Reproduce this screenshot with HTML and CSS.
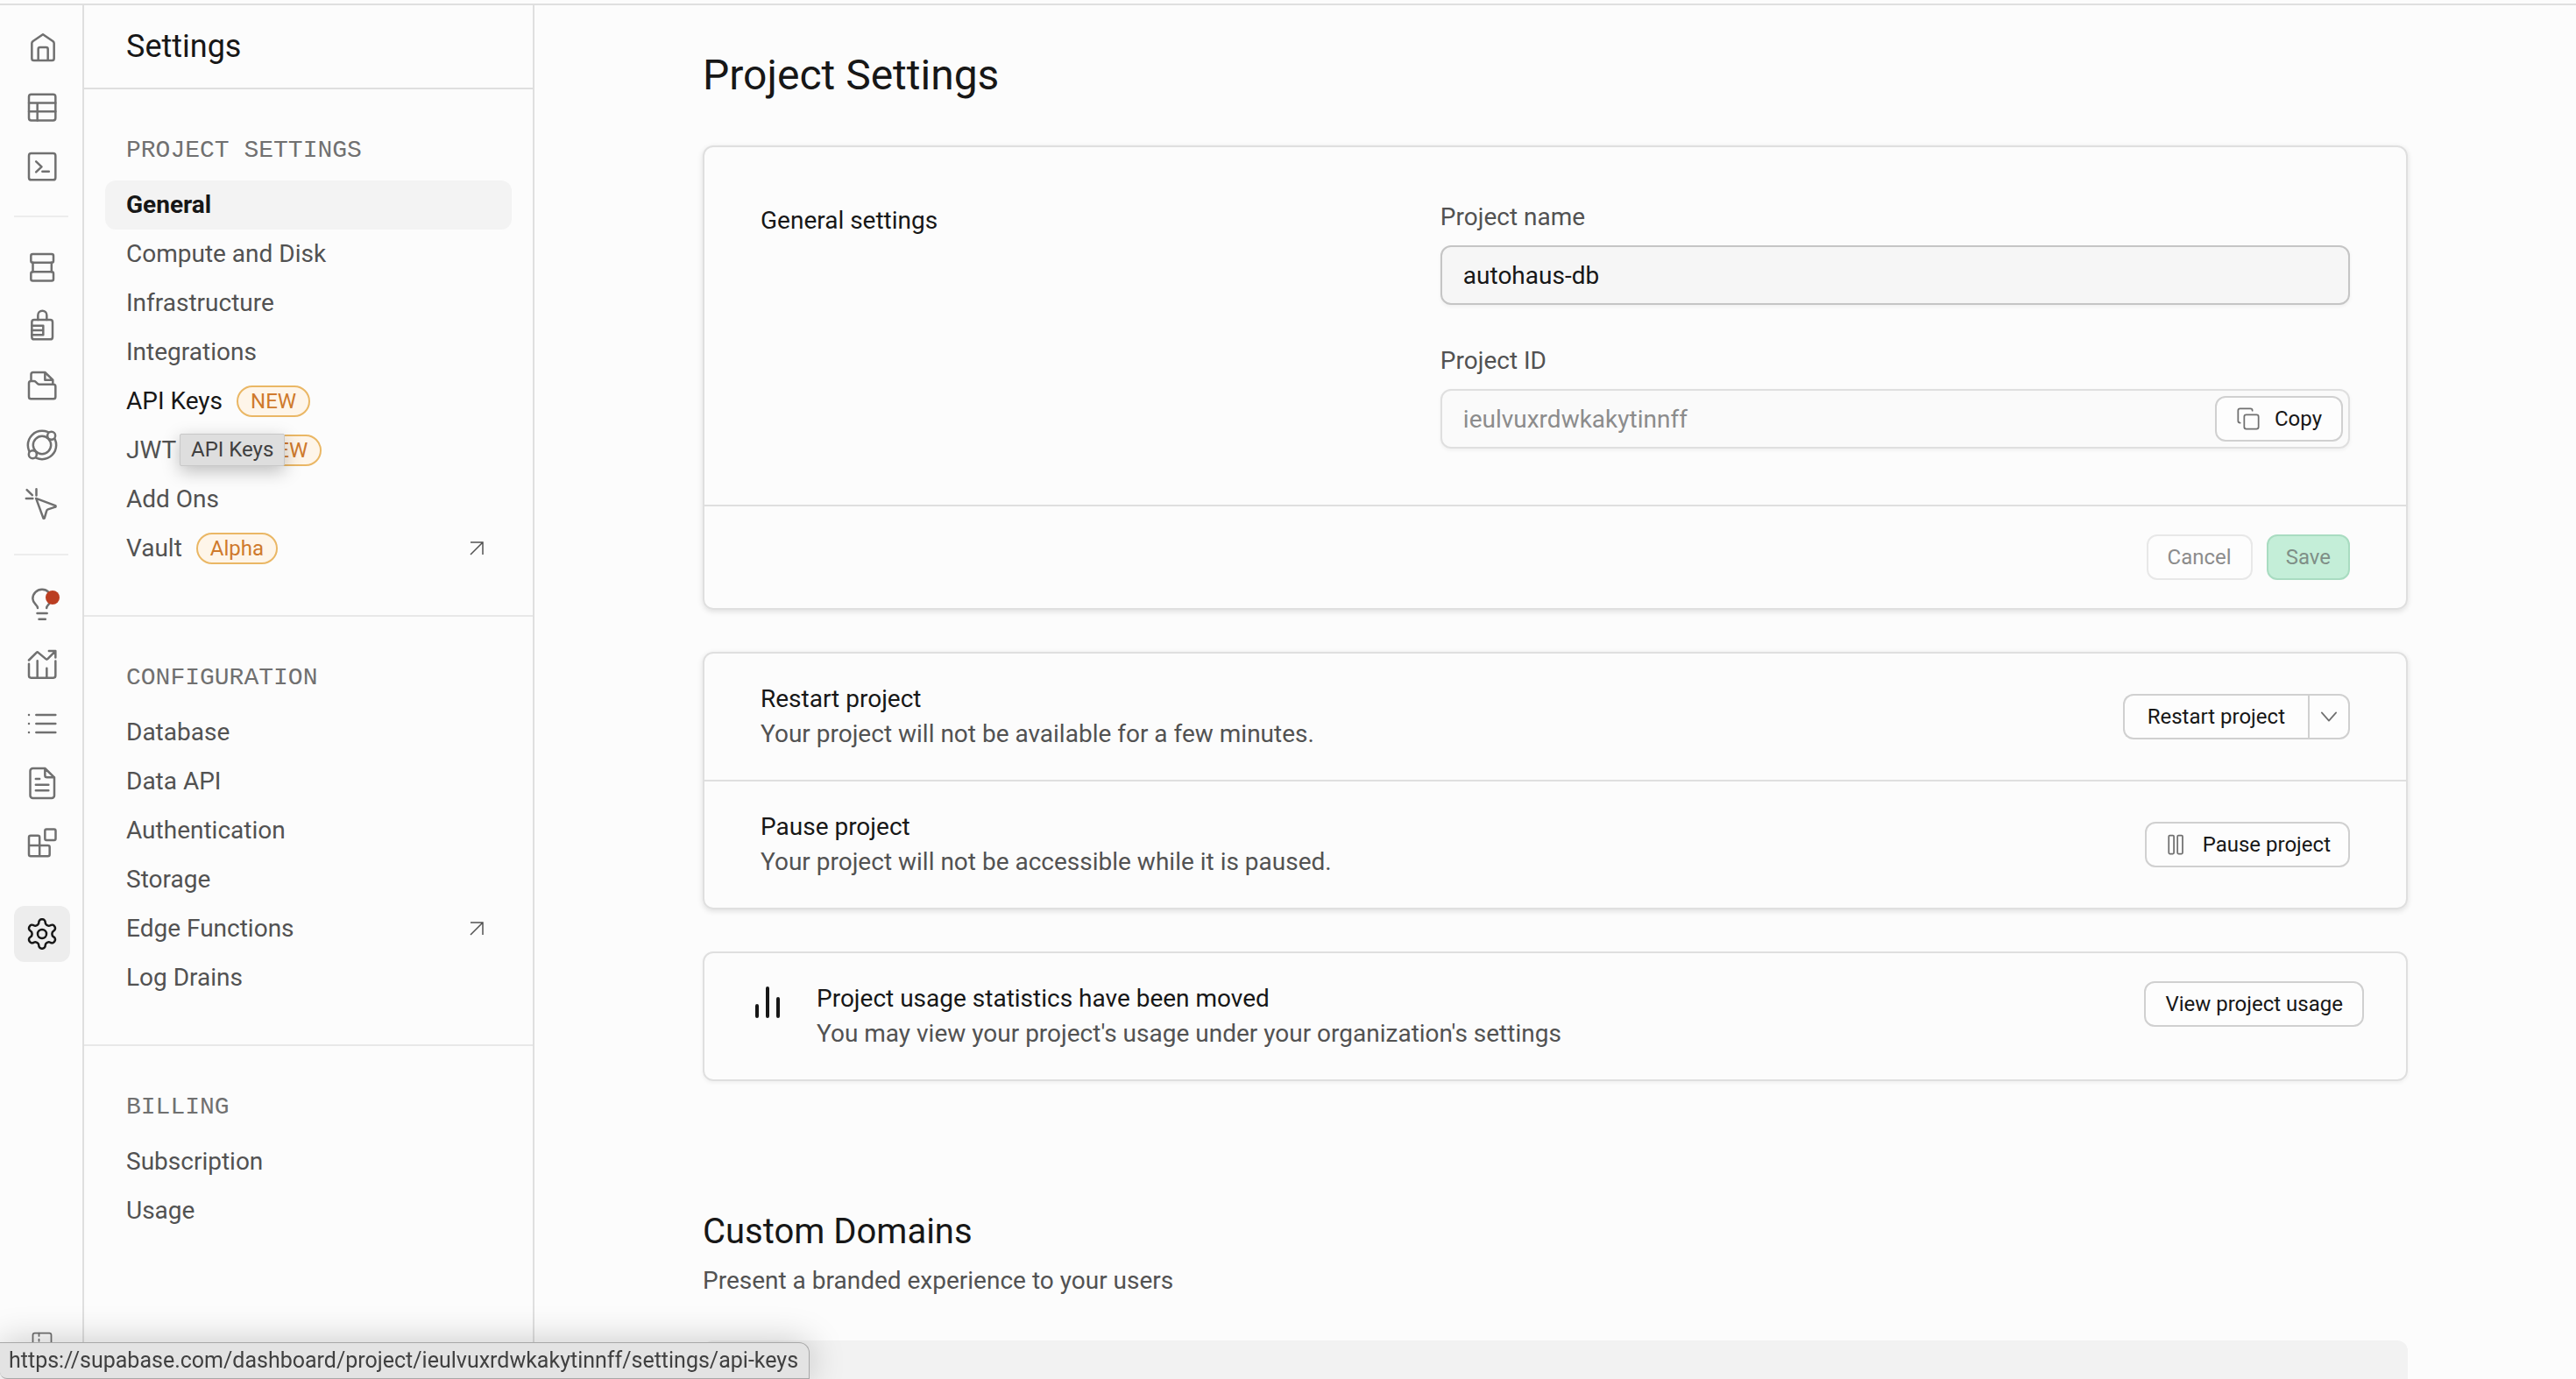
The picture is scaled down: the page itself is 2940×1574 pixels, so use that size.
FILE: index.html
```
<!DOCTYPE html>
<html lang="en">
<head>
  <meta charset="utf-8">
  <meta name="viewport" content="width=device-width, initial-scale=1">
  <title>Project Settings | Supabase</title>
  <link rel="stylesheet" href="styles.css">
</head>
<body>
  <div class="app">
    <nav class="rail" aria-label="Project">
      <a class="rail-link" href="#home" aria-label="Home"><svg class="icon" viewBox="0 0 24 24"><path d="M5 9.200c0-.6.300-1 .8-1.400L12.600 3.200l6.800 4.600c.5.400.8.800.8 1.400V19.600c0 .8-.6 1.400-1.400 1.400H6.400C5.600 21 5 20.400 5 19.600zM9.400 21v-7.800c0-.7.500-1.200 1.200-1.200h4.200c.7 0 1.200.5 1.200 1.200V21"/></svg></a>
      <a class="rail-link" href="#tables" aria-label="Table Editor"><svg class="icon" viewBox="0 0 24 24"><rect x="3" y="3.500" width="18.200" height="17.800" rx="1.600"/><path d="M3 9.300h18.200M3 15.100h18.200M8.800 9.300v12"/></svg></a>
      <a class="rail-link" href="#sql" aria-label="SQL Editor"><svg class="icon" viewBox="0 0 24 24"><rect x="3" y="3" width="18.200" height="18.200" rx="1.600"/><path d="m7.900 8.600 3.800 3.600-3.800 3.600M12.200 15.500h4.500"/></svg></a>
      <hr class="rail-rule">
      <a class="rail-link" href="#database" aria-label="Database"><svg class="icon" viewBox="0 0 24 24"><rect x="4.400" y="3.600" width="15.400" height="5.900" rx="1.200"/><rect x="4.400" y="15.700" width="15.400" height="6.200" rx="1.200"/><path d="M5.700 9.500v6.200M18.500 9.500v6.200"/></svg></a>
      <a class="rail-link" href="#auth" aria-label="Authentication"><svg class="icon" viewBox="0 0 24 24"><rect x="5" y="7.800" width="14.200" height="13.400" rx="1.600"/><path d="M9.200 7.800V4.600a3 3 0 0 1 6 0v3.200M5 11.900h7.800v6.200H5M5 15h7.800"/></svg></a>
      <a class="rail-link" href="#storage" aria-label="Storage"><svg class="icon" viewBox="0 0 24 24"><path d="M4.500 9V4.400C4.500 3.600 5.100 3 5.900 3H14l5.400 5.200v3M14 3v5.200h5.400M3 10.400C3 9.600 3.600 9 4.400 9h2c.5 0 .8.100 1.100.4l1.400 1.300c.3.300.7.500 1.200.5h9.700c.8 0 1.400.6 1.400 1.400v7.200c0 .8-.6 1.400-1.400 1.400H4.400c-.8 0-1.400-.6-1.400-1.400z"/></svg></a>
      <a class="rail-link" href="#edge" aria-label="Edge Functions"><svg class="icon" viewBox="0 0 24 24"><circle cx="12" cy="12" r="9.700"/><circle cx="12" cy="12" r="6.100"/><circle class="icon-knob" cx="18.400" cy="5.600" r="2.700"/><circle class="icon-knob" cx="5.600" cy="18.400" r="2.700"/></svg></a>
      <a class="rail-link" href="#realtime" aria-label="Realtime"><svg class="icon" viewBox="0 0 24 24"><path d="m1.600 1.900 3.700 3.600M8.100 1.400v4.300M1.100 7.800h4.500M7.900 7.700l13.200 5c.4.200.4.800 0 .9l-5 1.600a1.600 1.600 0 0 0-1 1.100l-1.400 4.800c-.2.500-.8.500-.9 0z"/></svg></a>
      <hr class="rail-rule">
      <a class="rail-link" href="#advisors" aria-label="Advisors"><svg class="icon" viewBox="0 0 24 24"><path d="M9 14.400C9 12.200 5.600 11.400 5.600 8a6.400 6.400 0 0 1 12.800 0c0 3.400-3.300 4.200-3.300 6.400M8.700 18h6.700M9.900 22h4.400"/></svg><span class="rail-dot"></span></a>
      <a class="rail-link" href="#reports" aria-label="Reports"><svg class="icon" viewBox="0 0 24 24"><path d="M3 11.800v8.200c0 .8.600 1.400 1.400 1.400h15.400c.8 0 1.400-.6 1.400-1.400V9.900M8.800 9.700v11.700M15.200 14.800v6.600M3 9.300l5.200-5.200a.9.900 0 0 1 1.200 0l5.200 4.400a.9.900 0 0 0 1.200 0l5.200-5.300M16.700 3h4.500v4.500"/></svg></a>
      <a class="rail-link" href="#logs" aria-label="Logs"><svg class="icon" viewBox="0 0 24 24"><path d="M8 6h13.200M8 12h13.200M8 18h13.200M3 6h.01M3 12h.01M3 18h.01"/></svg></a>
      <a class="rail-link" href="#docs" aria-label="API Docs"><svg class="icon" viewBox="0 0 24 24"><path d="M14 1.800H5.700c-1 0-1.800.8-1.800 1.800v16.800c0 1 .8 1.800 1.800 1.800h12.900c1 0 1.800-.8 1.800-1.800V8zM14 1.800v4.800c0 .8.600 1.400 1.400 1.400h5M7.700 9h2.600M7.700 13h8.700M7.700 17h8.700"/></svg></a>
      <a class="rail-link" href="#integrations" aria-label="Integrations"><svg class="icon" viewBox="0 0 24 24"><rect x="14" y="2.700" width="7.300" height="7.500" rx="1"/><path d="M10.300 21.200V8.200c0-.7-.5-1.200-1.200-1.200H4.200C3.500 7 3 7.500 3 8.200V20c0 .7.500 1.200 1.200 1.200H16c.7 0 1.200-.5 1.200-1.200v-5c0-.7-.5-1.200-1.200-1.200H3"/></svg></a>
      <a class="rail-link rail-link-active" href="#settings" aria-label="Project Settings"><svg class="icon" viewBox="0 0 24 24"><path d="M12.220 2h-.44a2 2 0 0 0-2 2v.18a2 2 0 0 1-1 1.730l-.43.250a2 2 0 0 1-2 0l-.15-.08a2 2 0 0 0-2.730.730l-.22.380a2 2 0 0 0 .730 2.730l.15.100a2 2 0 0 1 1 1.720v.510a2 2 0 0 1-1 1.740l-.15.090a2 2 0 0 0-.730 2.730l.22.380a2 2 0 0 0 2.730.730l.15-.08a2 2 0 0 1 2 0l.43.250a2 2 0 0 1 1 1.730V20a2 2 0 0 0 2 2h.44a2 2 0 0 0 2-2v-.18a2 2 0 0 1 1-1.730l.43-.25a2 2 0 0 1 2 0l.15.080a2 2 0 0 0 2.730-.73l.22-.39a2 2 0 0 0-.73-2.730l-.15-.08a2 2 0 0 1-1-1.740v-.5a2 2 0 0 1 1-1.740l.15-.09a2 2 0 0 0 .730-2.730l-.22-.38a2 2 0 0 0-2.730-.73l-.15.080a2 2 0 0 1-2 0l-.43-.25a2 2 0 0 1-1-1.730V4a2 2 0 0 0-2-2z"/><circle cx="12" cy="12" r="3"/></svg></a>
      <button class="rail-toggle" type="button" aria-label="Sidebar control"><svg class="icon icon-small" viewBox="0 0 24 24"><rect x="3" y="3" width="18" height="18" rx="2"/><path d="M9 3v3M9 9v2M9 14v1M9 19v2"/></svg></button>
    </nav>

    <aside class="sidebar">
      <h2 class="sidebar-title">Settings</h2>
      <section class="menu">
        <h3 class="menu-heading">PROJECT SETTINGS</h3>
        <a class="menu-link menu-link-active" href="#general">General</a>
        <a class="menu-link" href="#compute">Compute and Disk</a>
        <a class="menu-link" href="#infrastructure">Infrastructure</a>
        <a class="menu-link" href="#integrations">Integrations</a>
        <a class="menu-link menu-link-hover" href="#api-keys">API Keys <span class="badge">NEW</span><span class="tooltip" role="tooltip">API Keys</span></a>
        <a class="menu-link" href="#jwt">JWT Keys <span class="badge">NEW</span></a>
        <a class="menu-link" href="#addons">Add Ons</a>
        <a class="menu-link" href="#vault">Vault <span class="badge">Alpha</span><svg class="menu-arrow" viewBox="0 0 16 16"><path d="M1 1h14v14M15 1 1 15"/></svg></a>
      </section>
      <section class="menu">
        <h3 class="menu-heading">CONFIGURATION</h3>
        <a class="menu-link" href="#config-database">Database</a>
        <a class="menu-link" href="#data-api">Data API</a>
        <a class="menu-link" href="#authentication">Authentication</a>
        <a class="menu-link" href="#config-storage">Storage</a>
        <a class="menu-link" href="#functions">Edge Functions<svg class="menu-arrow" viewBox="0 0 16 16"><path d="M1 1h14v14M15 1 1 15"/></svg></a>
        <a class="menu-link" href="#log-drains">Log Drains</a>
      </section>
      <section class="menu">
        <h3 class="menu-heading">BILLING</h3>
        <a class="menu-link" href="#subscription">Subscription</a>
        <a class="menu-link" href="#usage">Usage</a>
      </section>
    </aside>

    <main class="main">
      <h1 class="page-title">Project Settings</h1>
      <div class="cards">
        <form class="card">
          <div class="form-grid">
            <h2 class="form-title">General settings</h2>
            <div class="fields">
              <div class="field">
                <label class="label" for="name">Project name</label>
                <input class="input" id="name" type="text" value="autohaus-db">
              </div>
              <div class="field">
                <label class="label" for="project-id">Project ID</label>
                <div class="input-wrap">
                  <input class="input input-muted" id="project-id" type="text" value="ieulvuxrdwkakytinnff" readonly>
                  <button class="button copy" type="button"><svg class="icon icon-small" viewBox="0 0 24 24"><rect x="8" y="8" width="14" height="14" rx="2"/><path d="M4 16c-1.100 0-2-.9-2-2V4c0-1.100.9-2 2-2h10c1.100 0 2 .9 2 2"/></svg>Copy</button>
                </div>
              </div>
            </div>
          </div>
          <div class="card-footer">
            <button class="button button-muted" type="button">Cancel</button>
            <button class="button button-save" type="submit">Save</button>
          </div>
        </form>

        <div class="card">
          <div class="row">
            <div class="row-text">
              <p class="row-title">Restart project</p>
              <p class="row-note">Your project will not be available for a few minutes.</p>
            </div>
            <div class="split">
              <button class="button split-main" type="button">Restart project</button>
              <button class="button split-more" type="button" aria-label="More restart options"><svg class="icon icon-small" viewBox="0 0 24 24"><path d="m5 8 7 8 7-8"/></svg></button>
            </div>
          </div>
          <div class="row">
            <div class="row-text">
              <p class="row-title">Pause project</p>
              <p class="row-note">Your project will not be accessible while it is paused.</p>
            </div>
            <button class="button button-icon" type="button"><svg class="icon icon-small" viewBox="0 0 24 24"><rect x="4.500" y="3" width="5" height="18" rx="1"/><rect x="13" y="3" width="5" height="18" rx="1"/></svg>Pause project</button>
          </div>
        </div>

        <div class="card card-flat notice">
          <svg class="icon icon-bars" viewBox="0 0 24 24"><path d="M18 20V10M12 20V4M6 20v-6"/></svg>
          <div class="row-text">
            <p class="row-title">Project usage statistics have been moved</p>
            <p class="row-note">You may view your project's usage under your organization's settings</p>
          </div>
          <button class="button" type="button">View project usage</button>
        </div>
      </div>

      <section class="domains">
        <h2 class="section-title">Custom Domains</h2>
        <p class="row-note">Present a branded experience to your users</p>
        <div class="banner">
          <svg class="icon icon-bars" viewBox="0 0 24 24"><circle cx="12" cy="12" r="9"/><path d="M12 8v5M12 16h.01"/></svg>
          <p class="row-title">Custom domains are a Pro Plan add-on</p>
        </div>
      </section>
    </main>
  </div>
  <div class="status">https://supabase.com/dashboard/project/ieulvuxrdwkakytinnff/settings/api-keys</div>
</body>
</html>
```
FILE: styles.css
```
:root {
  --bg: #fcfcfc;
  --line: #dfdfdf;
  --line-soft: #e8e8e8;
  --line-strong: #d0d0d0;
  --text: #171717;
  --text-light: #525252;
  --text-lighter: #707070;
}

* {
  box-sizing: border-box;
}

body {
  margin: 0;
  background: var(--bg);
  color: var(--text);
  font-family: Roboto, "Liberation Sans", sans-serif;
  font-size: 28px;
  line-height: 40px;
}

h1, h2, h3, p {
  margin: 0;
  font-weight: 400;
}

a {
  color: inherit;
  text-decoration: none;
}

button, input {
  font: inherit;
  color: inherit;
}

.app {
  display: flex;
  height: 100vh;
  padding-top: 4px;
  overflow: hidden;
}

.icon {
  display: block;
  flex: none;
  width: 40px;
  height: 40px;
  fill: none;
  stroke: currentColor;
  stroke-width: 1.5;
  stroke-linecap: round;
  stroke-linejoin: round;
}

.icon-small {
  width: 28px;
  height: 28px;
  color: var(--text-lighter);
}

.icon-bars {
  width: 48px;
  height: 48px;
  stroke-width: 2;
}

.icon-knob {
  fill: var(--bg);
}

/* Icon rail */

.rail {
  display: flex;
  flex: none;
  flex-direction: column;
  gap: 4px;
  width: 96px;
  padding: 16px 14px 10px 16px;
  border-top: 2px solid var(--line);
  border-right: 2px solid var(--line);
  color: var(--text-lighter);
}

.rail-link, .rail-toggle {
  position: relative;
  display: flex;
  flex: none;
  align-items: center;
  justify-content: center;
  width: 64px;
  height: 64px;
  padding: 0;
  border: 0;
  border-radius: 12px;
  background: none;
}

.rail-toggle {
  margin-top: auto;
}

.rail-link-active {
  margin-top: 36px;
  background: #ededed;
  color: var(--text);
}

.rail-rule {
  flex: none;
  width: 62px;
  height: 2px;
  margin: 20px 0;
  border: 0;
  background: #ededed;
}

.rail-dot {
  position: absolute;
  top: 16px;
  right: 12px;
  width: 16px;
  height: 16px;
  border-radius: 50%;
  background: #bb3e22;
}

/* Settings menu */

.sidebar {
  flex: none;
  width: 514px;
  border-top: 2px solid var(--line);
  border-right: 2px solid var(--line);
}

.sidebar-title {
  padding: 0 48px;
  border-bottom: 2px solid var(--line);
  font-size: 36px;
  line-height: 94px;
}

.menu {
  padding: 48px 24px;
}

.menu + .menu {
  border-top: 2px solid var(--line-soft);
}

.menu-heading {
  padding: 2px 24px 14px;
  color: var(--text-lighter);
  font-family: "Liberation Mono", monospace;
  font-size: 28px;
}

.menu-link {
  position: relative;
  display: flex;
  align-items: center;
  height: 56px;
  padding: 0 24px;
  border-radius: 12px;
  color: var(--text-light);
}

.menu-link-active {
  background: #f3f3f3;
  color: var(--text);
  font-weight: 700;
}

.menu-link-hover {
  z-index: 1;
  color: var(--text);
}

.menu-arrow {
  width: 16px;
  height: 16px;
  margin-right: 8px;
  margin-left: auto;
  fill: none;
  stroke: currentColor;
  stroke-width: 1.5;
}

.badge {
  margin-left: 16px;
  padding: 0 14px;
  border: 2px solid #eab765;
  border-radius: 18px;
  background: #fef5e9;
  color: #cf7a2c;
  font-size: 24px;
  line-height: 32px;
}

.tooltip {
  position: absolute;
  top: 65px;
  left: 85px;
  padding: 0 12px;
  border: 1px solid #c8c8c8;
  border-radius: 2px;
  background: #dedede;
  box-shadow: 0 6px 20px rgba(0, 0, 0, 0.25);
  color: #404040;
  font-size: 24px;
  line-height: 35px;
}

/* Page */

.main {
  flex: 1;
  min-width: 0;
  padding: 48px 192px;
  border-top: 2px solid var(--line);
  overflow: hidden;
}

.page-title {
  margin-bottom: 48px;
  font-size: 48px;
  line-height: 64px;
}

.cards {
  display: grid;
  gap: 48px;
}

.card {
  border: 2px solid var(--line);
  border-radius: 12px;
  box-shadow: 0 2px 6px rgba(0, 0, 0, 0.12);
}

.card-flat {
  box-shadow: 0 2px 4px rgba(0, 0, 0, 0.05);
}

.form-grid {
  display: grid;
  grid-template-columns: repeat(12, minmax(0, 1fr));
  gap: 48px;
  padding: 60px 64px 64px;
}

.form-title {
  grid-column: span 5;
  padding-top: 4px;
  font-size: 28px;
}

.fields {
  display: grid;
  grid-column: span 7;
  gap: 44px;
}

.field {
  display: grid;
  gap: 12px;
}

.label {
  color: var(--text-light);
}

.input-wrap {
  position: relative;
}

.input {
  display: block;
  width: 100%;
  height: 68px;
  padding: 0 24px;
  border: 2px solid #c5c5c5;
  border-radius: 12px;
  background: #f6f6f6;
  box-shadow: 0 2px 4px rgba(0, 0, 0, 0.05);
}

.input-muted {
  border-color: var(--line);
  background: #fafafa;
  color: #8c8c8c;
}

.card-footer {
  display: flex;
  justify-content: flex-end;
  gap: 16px;
  padding: 32px 64px;
  border-top: 2px solid var(--line);
}

.button {
  display: flex;
  flex: none;
  align-items: center;
  justify-content: center;
  height: 52px;
  padding: 0 22px;
  border: 2px solid var(--line-strong);
  border-radius: 12px;
  background: #fdfdfd;
  font-size: 24px;
}

.copy {
  position: absolute;
  top: 8px;
  right: 8px;
  gap: 16px;
}

.button-icon {
  gap: 16px;
  padding: 0 20px;
}

.button-muted {
  border-color: var(--line-soft);
  color: #8c8c8c;
}

.button-save {
  padding: 0 20px;
  border-color: #a9dcc1;
  background: #c4eed8;
  color: #7f8f87;
}

.split {
  display: flex;
}

.split-main {
  padding: 0 26px;
  border-right: 0;
  border-radius: 12px 0 0 12px;
}

.split-more {
  padding: 0 8px;
  border-radius: 0 12px 12px 0;
}

.row {
  display: flex;
  align-items: center;
  justify-content: space-between;
  padding: 32px 64px;
}

.row + .row {
  border-top: 2px solid var(--line);
}

.row-note {
  color: var(--text-light);
}

.notice {
  display: flex;
  align-items: flex-start;
  gap: 32px;
  padding: 32px 48px;
}

.notice .row-text {
  flex: 1;
}

/* Custom domains */

.domains {
  margin-top: 144px;
}

.section-title {
  margin-bottom: 8px;
  font-size: 40px;
  line-height: 56px;
}

.banner {
  display: flex;
  gap: 32px;
  margin-top: 48px;
  padding: 36px 32px;
  border-radius: 12px;
  background: #f2f2f2;
}

/* Link preview in the window corner */

.status {
  position: fixed;
  bottom: 0;
  left: 0;
  padding: 0 12px 0 10px;
  border: 1px solid #a8a8a8;
  border-left: 0;
  border-radius: 0 12px 0 8px;
  background: #e3e3e3;
  box-shadow: 0 0 40px rgba(0, 0, 0, 0.22);
  color: #404040;
  font-size: 25px;
  line-height: 40px;
}
```
